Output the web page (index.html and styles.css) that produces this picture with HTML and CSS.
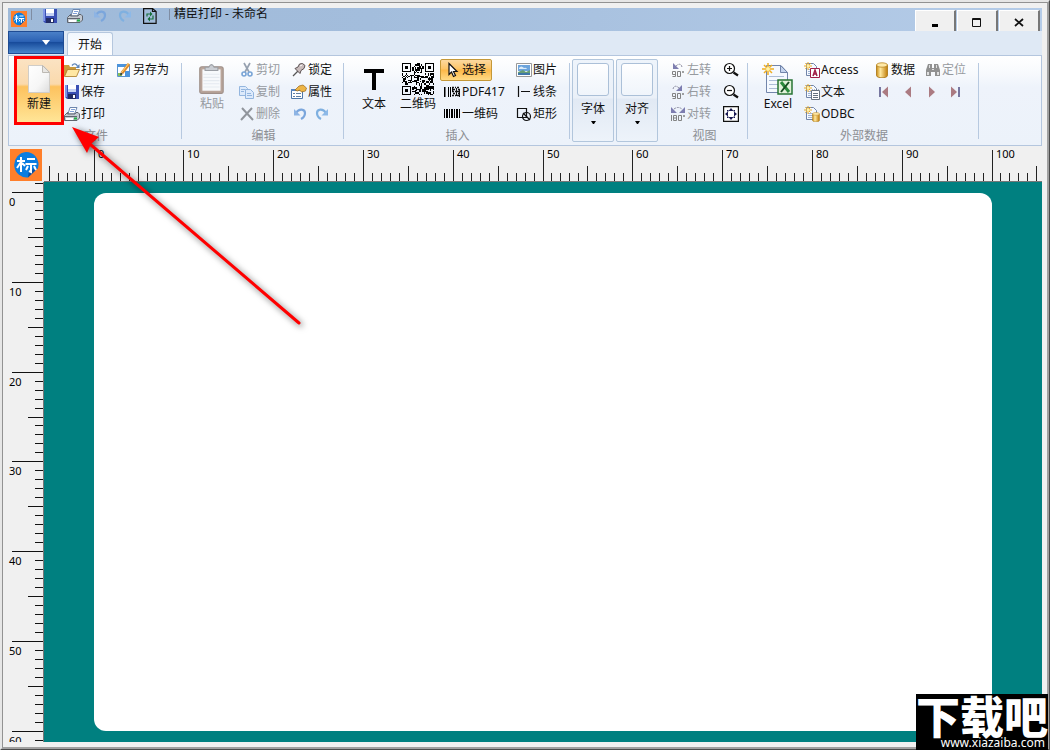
FILE: index.html
```html
<!DOCTYPE html>
<html lang="zh-CN">
<head>
<meta charset="utf-8">
<title>精臣打印 - 未命名</title>
<link rel="stylesheet" href="styles.css">
</head>
<body>
<svg class="defs" aria-hidden="true">
  <defs>
    <linearGradient id="gold" x1="0" x2="1"><stop offset="0" stop-color="#c98a12"/><stop offset=".35" stop-color="#ffe9a0"/><stop offset="1" stop-color="#c07c08"/></linearGradient>
    <linearGradient id="paper" x1="0" y1="0" x2="1" y2="1"><stop offset="0" stop-color="#fff"/><stop offset=".6" stop-color="#f6f6f6"/><stop offset="1" stop-color="#dcdcdc"/></linearGradient>
  </defs>
  <symbol id="i-logo" viewBox="0 0 32 32"><path fill="#ff7f2a" d="M0 0h32v32H0z"/><path fill="#0a7de0" d="M16 3a12.500 12.500 0 0 1 12 16L18 28.500A12.500 12.500 0 1 1 16 3z"/><path fill="#0b4f9e" d="M28 19l-10 9.500 1-7z"/><path fill="none" stroke="#fff" stroke-width="2" d="M7 12h8M11 8v15M11 13l-4 6M12 14l3 3M17 10h8M15.500 15h11M21 15v8l-2-1M18 17l-2 4M24 17l2 4"/></symbol>
  <symbol id="i-save" viewBox="0 0 16 16"><path fill="#3a4fb4" d="M1 1h14v14H3l-2-2z"/><path fill="#7f96e6" d="M1 1h2v12H1z"/><path fill="#fff" d="M4 1h8v7H4z"/><path fill="#c6d2f4" d="M4 5h8v3H4z"/><path fill="#222c66" d="M4 10h8v5H4z"/><path fill="#fff" d="M9 11h2v3H9z"/></symbol>
  <symbol id="i-print" viewBox="0 0 16 16"><path fill="#fff" stroke="#6d86ad" d="M6 1.500h7L10.500 8H4z"/><path stroke="#7fa0d8" d="M7 3.500h4M6 5.500h4"/><path fill="#c3c9d2" stroke="#5e646e" d="M.5 9.500l3-3H4L3.500 8H11l1-1.500h2l1.500 1.500v4L13 14.500H.5z"/><path fill="#5f656f" d="M1 10h12v1H1z"/><path fill="#1fae44" d="M10 11.500h3v2h-3z"/><path fill="#fff" d="M2 12h7v2H2z"/></symbol>
  <symbol id="i-undo" viewBox="0 0 16 16"><path fill="none" stroke="#7ba6dc" stroke-width="2.200" d="M4 7c3-5 9-4 9 0 0 3-2 5-4 6"/><path fill="#8db4e4" d="M2 3v6.500h6.500z"/></symbol>
  <symbol id="i-redo" viewBox="0 0 16 16"><path fill="none" stroke="#7fb0e0" stroke-width="2.200" d="M12 7C9 2 3 3 3 7c0 3 2 5 4 6"/><path fill="#8db9e8" d="M14 3v6.500H7.500z"/></symbol>
  <symbol id="i-refresh" viewBox="0 0 16 16"><path fill="none" stroke="#111" stroke-width="1.200" d="M1.600.6h9l3.500 3v11.800H1.600zM10.500.5v3h3"/><path fill="none" stroke="#16703a" stroke-width="1.200" d="M5 8.500V6h4M11 7.500V11H7"/><path fill="#16703a" d="M8 3.500L10.500 6 8 8.500zM8 8.500L5.500 11 8 13.500z"/></symbol>
  <symbol id="i-new" viewBox="0 0 24 30"><path fill="url(#paper)" stroke="#d0cdc8" d="M1.500 1.500H16L22.500 8v20.500h-21z"/><path fill="#e8e6e3" stroke="#bdb9b3" d="M15.500 1.500v7h7z"/></symbol>
  <symbol id="i-open" viewBox="0 0 16 16"><path fill="#c99a3c" d="M0 3h5l1 2h6v9H0z"/><path fill="#ffe7a3" stroke="#a87824" stroke-width=".8" d="M.5 14.500l3-7H15.500l-3 7z"/><path fill="none" stroke="#5c84b8" stroke-width="1.400" d="M8 3.500c2-2.500 4-2 5.500.5"/><path fill="#5c84b8" d="M15.500 2v4h-4z"/></symbol>
  <symbol id="i-saveas" viewBox="0 0 16 16"><path fill="#fff" stroke="#5c94cc" d="M1.500 2.500h12v12h-12z"/><path fill="#4c94dc" d="M1 2h9v3H1zM9 9h5v6H9z"/><path fill="#8ac058" d="M2 11h4v3H2z"/><path stroke="#e08a2a" stroke-width="3" d="M6 11l7-9"/><path stroke="#ffd678" d="M6 10l7-9"/><path fill="#333" d="M4 13.500l.7-3L7 12z"/></symbol>
  <symbol id="i-paste" viewBox="0 0 26 30"><rect x="1.500" y="3.500" width="22" height="25" rx="2" fill="#b39c90" stroke="#96857d"/><path fill="#f8fafc" d="M4 6h17v20H4z"/><path stroke="#e4e9ef" d="M5 10.500h15M5 13.500h15M5 16.500h15M5 19.500h15M5 22.500h15"/><path fill="#c5c9cf" stroke="#92969c" d="M6.500 7V4H10q2.500-5 5 0h3.500v3z"/></symbol>
  <symbol id="i-cut" viewBox="0 0 16 16"><path fill="none" stroke="#8d98a8" stroke-width="1.700" d="M5 1l5 9M11 1L6 10"/><g fill="none" stroke="#6c9cd2" stroke-width="1.600"><circle cx="5" cy="12" r="2"/><circle cx="11" cy="12" r="2"/></g></symbol>
  <symbol id="i-copy" viewBox="0 0 16 16"><g fill="#dceafc" stroke="#8bb0dc"><path d="M.5 2.500h6l2 2v7h-8z"/><path d="M6.500 5.500h5l3 3v6h-8z"/></g><path stroke="#8bb0dc" d="M2 5.500h4M2 7.500h3M8 9.500h4M8 11.500h5"/></symbol>
  <symbol id="i-del" viewBox="0 0 16 16"><path stroke="#878b92" stroke-width="2" d="M3 2l11 12M13 2L2 14"/></symbol>
  <symbol id="i-lock" viewBox="0 0 16 16"><path stroke="#555" stroke-width="1.300" d="M2 14l5-5"/><path fill="#c9bcbc" stroke="#5a5052" d="M4 6.500l5 5 1-3 3-2 1-3-2.500-2-3 .5L7 5z"/><path stroke="#fff" d="M9 4l2-1"/></symbol>
  <symbol id="i-prop" viewBox="0 0 16 16"><path fill="#fff" stroke="#4d77aa" d="M.5 5.500h11v9H.5z"/><path fill="#5684c0" d="M0 5h12v2H0z"/><path stroke="#5f7fa6" d="M2 9.500h2M5 9.500h5M2 12.500h2M5 12.500h5"/><path fill="#edb546" stroke="#99671a" stroke-width=".7" d="M4 6l4-4 4-1 3.500 3-1 3-4 1-2-2-2 1z"/></symbol>
  <symbol id="i-text" viewBox="0 0 32 32"><path fill="#000" d="M6 6h20v4h-8v17h-4V10H6z"/></symbol>
  <symbol id="i-cursor" viewBox="0 0 16 16"><path fill="#fff" stroke="#111" stroke-width="1.200" d="M5 1.500v11l2.500-2.500 2 4.500 2-1-2-4H13z"/></symbol>
  <symbol id="i-pdf" viewBox="0 0 16 16"><path d="M0 3h1.500v10H0zM4 3h1v10H4zM6 3h1v10H6z"/><path stroke="#111" stroke-width="1.300" stroke-dasharray="2 1 1 1" d="M8 3.500h8M9 5.500h7M8 7.500h8M9 9.500h6M8 11.500h8"/><path stroke="#111" d="M8.500 4v4M12.500 4v8M15.500 6v7"/></symbol>
  <symbol id="i-bar" viewBox="0 0 16 16"><path d="M0 3h1v9H0zM2 3h2v9H2zM5 3h1v9H5zM7 3h2v9H7zM10 3h1v9h-1zM12 3h2v9h-2zM15 3h1v9h-1z"/></symbol>
  <symbol id="i-pic" viewBox="0 0 16 16"><path fill="#fff" stroke="#999" d="M.5 1.500h15v13H.5z"/><path fill="#6da4dc" d="M2 3h12v6H2z"/><path fill="#dcecf8" d="M3 6q2-3 5 0 2-1 3 1H3z"/><path fill="#659d78" d="M2 10l5-2 3 2 4-2v5H2z"/><path fill="#3f77a8" d="M2 11h12v2H2z"/></symbol>
  <symbol id="i-line" viewBox="0 0 16 16"><path fill="none" stroke="#111" stroke-width="1.200" d="M2.500 2v11M5 7.500h9"/></symbol>
  <symbol id="i-rect" viewBox="0 0 16 16"><g fill="none" stroke="#111" stroke-width="1.200"><path d="M1.500 2.500h9v9h-9z"/><circle cx="10.500" cy="10.500" r="4"/><path d="M7 7l7 7"/></g></symbol>
  <symbol id="i-left" viewBox="0 0 16 16"><path fill="#7171a8" d="M3 1v6h6z"/><path fill="none" stroke="#7f7f94" stroke-dasharray="2 1" d="M6 4c3-3 6-2 6 2"/><path fill="none" stroke="#777" d="M5.500 12.500h-3v-3h3v5h-3M7.500 9.500h3v5h-3zM12.500 9.500h1v1h-1z"/></symbol>
  <symbol id="i-right" viewBox="0 0 16 16"><path fill="#7171a8" d="M12 1v6H6z"/><path fill="none" stroke="#7f7f94" stroke-dasharray="2 1" d="M9 4C6 1 3 2 3 6"/><path fill="none" stroke="#777" d="M5.500 12.500h-3v-3h3v5h-3M7.500 9.500h3v5h-3zM12.500 9.500h1v1h-1z"/></symbol>
  <symbol id="i-flip" viewBox="0 0 16 16"><path fill="#7171a8" d="M1 1v6h6zM15 1v6H9z"/><path fill="none" stroke="#7f7f94" stroke-dasharray="2 1" d="M4 3q4-3 8 0"/><path fill="none" stroke="#777" d="M1.500 9v6M3.500 9.500h3v5h-3zM3.500 12h3M8.500 9.500h3v5h-3zM13.500 9.500h1v1h-1z"/></symbol>
  <symbol id="i-zin" viewBox="0 0 16 16"><circle cx="6.500" cy="6.500" r="5" fill="#fff" stroke="#111" stroke-width="1.200"/><path stroke="#111" stroke-width="1.200" d="M4 6.500h5M6.500 4v5"/><path stroke="#111" stroke-width="2.200" d="M10.500 10.500l4.500 3"/></symbol>
  <symbol id="i-zout" viewBox="0 0 16 16"><circle cx="6.500" cy="6.500" r="5" fill="#fff" stroke="#111" stroke-width="1.200"/><path stroke="#111" stroke-width="1.200" d="M4 6.500h5"/><path stroke="#111" stroke-width="2.200" d="M10.500 10.500l4.500 3"/></symbol>
  <symbol id="i-fit" viewBox="0 0 16 16"><path fill="#fff" stroke="#111" stroke-width="1.200" d="M.6.6h14.800v14.800H.6z"/><path fill="#171750" d="M8 2l2.500 3h-5zM8 14l2.500-3h-5zM2 8l3-2.500v5zM14 8l-3-2.500v5z"/><path fill="#171750" d="M4 4h1.500v1.500H4zM10.500 4H12v1.500h-1.500zM4 10.500h1.500V12H4zM10.500 10.500H12V12h-1.500z"/></symbol>
  <symbol id="i-star" viewBox="0 0 12 12"><path stroke="#efae22" stroke-width="1.500" d="M6 0v12M0 6h12M2 2l8 8M10 2l-8 8"/><circle cx="6" cy="6" r="2" fill="#fff3a8"/></symbol>
  <symbol id="i-excel" viewBox="0 0 32 32"><path fill="#f5f9ff" stroke="#7285ab" d="M4.500 2.500H19l6.500 7v20h-21z"/><path fill="#c4d4ee" stroke="#7285ab" d="M18.500 2.500v7h7z"/><path stroke="#adbdd8" d="M7 13.500h15M7 17.500h15M7 21.500h9M7 25.500h9"/><use href="#i-star" width="12" height="12"/><path fill="#e2f2da" stroke="#287434" stroke-width="1.500" d="M16 17h14v14H16z"/><path stroke="#2b8a3c" stroke-width="3" d="M19 19l8 10"/><path stroke="#174f22" stroke-width="2" d="M27 19l-8 10"/></symbol>
  <symbol id="i-doc" viewBox="0 0 16 16"><path fill="#f5f9ff" stroke="#7184a8" d="M2.500 1.500h7l3 3v9h-10z"/><path stroke="#9fb2d2" d="M4 7.500h6M4 9.500h6M4 11.500h4"/><use href="#i-star" width="8" height="8"/></symbol>
  <symbol id="i-access" viewBox="0 0 16 16"><use href="#i-doc"/><path fill="#fff" stroke="#a01e48" d="M6.500 6.500h9v9h-9z"/><path fill="none" stroke="#a01e48" stroke-width="1.500" d="M9 14l2-6 2 6M9.500 12h3"/></symbol>
  <symbol id="i-txt" viewBox="0 0 16 16"><use href="#i-doc"/><path fill="#fff" stroke="#66727f" d="M7.500 6.500h8v9h-8z"/><path stroke="#66727f" stroke-dasharray="1 1" d="M8 6h7"/><path stroke="#66727f" d="M9 9.500h5M9 11.500h5M9 13.500h5"/></symbol>
  <symbol id="i-db" viewBox="0 0 16 16"><path fill="url(#gold)" stroke="#a87412" stroke-width=".8" d="M2.500 3v10.500c0 3 11 3 11 0V3z"/><ellipse cx="8" cy="3" rx="5.500" ry="2.200" fill="#ffe9a8" stroke="#b98420" stroke-width=".8"/></symbol>
  <symbol id="i-odbc" viewBox="0 0 16 16"><use href="#i-doc"/><use href="#i-db" x="7" y="6" width="10" height="10"/></symbol>
  <symbol id="i-find" viewBox="0 0 16 16"><path fill="#868686" d="M3 2h4v4h2V2h4l2 6v6h-5v-4H6v4H1V8z"/><path fill="#ddd" d="M4 3h1v3H4zM11 3h1v3h-1zM2 10h2v3H2zM12 10h2v3h-2zM7 7h2v1H7z"/></symbol>
  <symbol id="i-first" viewBox="0 0 16 16"><path fill="#7777a0" d="M3 3h2v10H3z"/><path fill="#ab7b82" d="M12 2.500v11L6 8z"/></symbol>
  <symbol id="i-prev" viewBox="0 0 16 16"><path fill="#ab7b82" d="M11 2.500v11L5 8z"/></symbol>
  <symbol id="i-next" viewBox="0 0 16 16"><path fill="#ab7b82" d="M5 2.500v11L11 8z"/></symbol>
  <symbol id="i-last" viewBox="0 0 16 16"><path fill="#7777a0" d="M10 3h2v10h-2z"/><path fill="#ab7b82" d="M3 2.500v11L9 8z"/></symbol>
</svg>

<div class="window">
  <header class="titlebar">
    <svg class="icon title-logo"><use href="#i-logo"/></svg>
    <span class="title-sep"></span>
    <div class="quick">
      <button class="quick-btn" aria-label="保存"><svg class="icon"><use href="#i-save"/></svg></button>
      <button class="quick-btn" aria-label="打印"><svg class="icon"><use href="#i-print"/></svg></button>
      <button class="quick-btn" aria-label="撤销"><svg class="icon"><use href="#i-undo"/></svg></button>
      <button class="quick-btn" aria-label="重做"><svg class="icon"><use href="#i-redo"/></svg></button>
      <button class="quick-btn" aria-label="刷新"><svg class="icon"><use href="#i-refresh"/></svg></button>
    </div>
    <span class="title-sep"></span>
    <h1 class="title">精臣打印 - 未命名</h1>
    <div class="controls">
      <button class="control" aria-label="最小化"><svg viewBox="0 0 12 12"><path d="M3 7h6v3H3z"/></svg></button>
      <button class="control" aria-label="最大化"><svg viewBox="0 0 12 12"><path fill="none" stroke="#111" d="M1.500 1.500h8v8h-8zM1 2.500h9"/></svg></button>
      <button class="control" aria-label="关闭"><svg viewBox="0 0 12 12"><path stroke="#111" stroke-width="1.800" d="M2 2l8 7M10 2L2 9"/></svg></button>
    </div>
  </header>

  <nav class="tabs">
    <button class="app-menu" aria-label="菜单"><svg viewBox="0 0 8 5"><path fill="#fff" d="M0 0h8L4 5z"/></svg></button>
    <button class="tab">开始</button>
  </nav>

  <section class="ribbon">
    <div class="group file">
      <div class="tools">
        <button class="big new"><svg class="icon-new"><use href="#i-new"/></svg>新建</button>
        <div class="col">
          <button class="small"><svg class="icon"><use href="#i-open"/></svg>打开</button>
          <button class="small"><svg class="icon"><use href="#i-save"/></svg>保存</button>
          <button class="small"><svg class="icon"><use href="#i-print"/></svg>打印</button>
        </div>
        <div class="col">
          <button class="small"><svg class="icon"><use href="#i-saveas"/></svg>另存为</button>
        </div>
      </div>
      <div class="caption">文件</div>
    </div>

    <div class="group edit">
      <div class="tools">
        <button class="big paste off"><svg class="icon-big"><use href="#i-paste"/></svg>粘贴</button>
        <div class="col">
          <button class="small off"><svg class="icon"><use href="#i-cut"/></svg>剪切</button>
          <button class="small off"><svg class="icon"><use href="#i-copy"/></svg>复制</button>
          <button class="small off"><svg class="icon"><use href="#i-del"/></svg>删除</button>
        </div>
        <div class="col">
          <button class="small"><svg class="icon"><use href="#i-lock"/></svg>锁定</button>
          <button class="small"><svg class="icon"><use href="#i-prop"/></svg>属性</button>
          <div class="row">
            <button class="tiny" aria-label="撤销"><svg class="icon"><use href="#i-undo"/></svg></button>
            <button class="tiny" aria-label="重做"><svg class="icon"><use href="#i-redo"/></svg></button>
          </div>
        </div>
      </div>
      <div class="caption">编辑</div>
    </div>

    <div class="group insert">
      <div class="tools">
        <button class="big"><svg class="icon-big"><use href="#i-text"/></svg>文本</button>
        <button class="big qr"><svg class="icon-big" id="qr" viewBox="0 0 25 25" shape-rendering="crispEdges"></svg>二维码</button>
        <div class="col codes">
          <button class="small selected"><svg class="icon"><use href="#i-cursor"/></svg>选择</button>
          <button class="small"><svg class="icon"><use href="#i-pdf"/></svg>PDF417</button>
          <button class="small"><svg class="icon"><use href="#i-bar"/></svg>一维码</button>
        </div>
        <div class="col">
          <button class="small"><svg class="icon"><use href="#i-pic"/></svg>图片</button>
          <button class="small"><svg class="icon"><use href="#i-line"/></svg>线条</button>
          <button class="small"><svg class="icon"><use href="#i-rect"/></svg>矩形</button>
        </div>
      </div>
      <div class="caption">插入</div>
    </div>

    <div class="galleries">
      <button class="gallery"><span class="preview"></span>字体<svg class="caret" viewBox="0 0 5 3"><path d="M0 0h5L3 3H2z"/></svg></button>
      <button class="gallery"><span class="preview"></span>对齐<svg class="caret" viewBox="0 0 5 3"><path d="M0 0h5L3 3H2z"/></svg></button>
    </div>

    <div class="group view">
      <div class="tools">
        <div class="col turn">
          <button class="small off"><svg class="icon"><use href="#i-left"/></svg>左转</button>
          <button class="small off"><svg class="icon"><use href="#i-right"/></svg>右转</button>
          <button class="small off"><svg class="icon"><use href="#i-flip"/></svg>对转</button>
        </div>
        <div class="col">
          <button class="small" aria-label="放大"><svg class="icon"><use href="#i-zin"/></svg></button>
          <button class="small" aria-label="缩小"><svg class="icon"><use href="#i-zout"/></svg></button>
          <button class="small" aria-label="适合窗口"><svg class="icon"><use href="#i-fit"/></svg></button>
        </div>
      </div>
      <div class="caption">视图</div>
    </div>

    <div class="group external">
      <div class="tools">
        <button class="big excel"><svg class="icon-big"><use href="#i-excel"/></svg>Excel</button>
        <div class="col sources">
          <button class="small"><svg class="icon"><use href="#i-access"/></svg>Access</button>
          <button class="small"><svg class="icon"><use href="#i-txt"/></svg>文本</button>
          <button class="small"><svg class="icon"><use href="#i-odbc"/></svg>ODBC</button>
        </div>
        <div class="col">
          <div class="row spaced">
            <button class="small"><svg class="icon"><use href="#i-db"/></svg>数据</button>
            <button class="small off"><svg class="icon"><use href="#i-find"/></svg>定位</button>
          </div>
          <div class="row">
            <button class="tiny nav" aria-label="第一条"><svg class="icon"><use href="#i-first"/></svg></button>
            <button class="tiny nav" aria-label="上一条"><svg class="icon"><use href="#i-prev"/></svg></button>
            <button class="tiny nav" aria-label="下一条"><svg class="icon"><use href="#i-next"/></svg></button>
            <button class="tiny nav" aria-label="最后一条"><svg class="icon"><use href="#i-last"/></svg></button>
          </div>
        </div>
      </div>
      <div class="caption">外部数据</div>
    </div>
  </section>

  <main class="editor">
    <div class="corner"><svg class="corner-logo"><use href="#i-logo"/></svg></div>
    <svg class="ruler" id="ruler-x"></svg>
    <svg class="ruler" id="ruler-y"></svg>
    <div class="workspace"><div class="sheet" id="sheet"></div></div>
  </main>
</div>

<div class="highlight"></div>
<svg class="arrow" viewBox="0 0 250 220" aria-hidden="true">
  <path d="M22 19L237 203" stroke="#f00" stroke-width="3" stroke-linecap="round"/>
  <path d="M10 7l27 10-8 7-4 9z" fill="#f00"/>
</svg>
<div class="watermark"><span class="mark-name">下载吧</span><span class="mark-url">www.xiazaiba.com</span></div>
<script src="app.js"></script>
</body>
</html>
```
FILE: styles.css
```css
* { box-sizing: border-box; }
body {
  margin: 0;
  height: 100vh;
  overflow: hidden;
  position: relative;
  font: 12px/16px "Noto Sans", "Noto Sans CJK SC", sans-serif;
  color: #111;
  background: #f0f0f0;
}
button {
  font: inherit;
  color: inherit;
  background: none;
  border: 0;
  padding: 0;
  margin: 0;
  white-space: nowrap;
}
svg { display: block; flex: none; }
.defs { position: absolute; width: 0; height: 0; }
.icon { width: 16px; height: 16px; }
.icon-big { width: 32px; height: 32px; }
.icon-new { width: 24px; height: 32px; }

.window {
  height: 100%;
  display: flex;
  flex-direction: column;
  padding: 5px;
  border: 3px ridge #dcdcdc;
  border-top-color: #e6e6e6;
  border-left-color: #e6e6e6;
  border-right-color: #a0a0a0;
  border-bottom-color: #a0a0a0;
}

.titlebar {
  flex: none;
  height: 23px;
  display: flex;
  align-items: flex-start;
  padding-left: 3px;
  background: linear-gradient(90deg, #9fbad9, #a3bddc 35%, #b5cce8);
}
.title-logo { margin-top: 3px; }
.title-sep { width: 1px; height: 11px; margin: 1px 4px 0; background: #7f8da3; }
.quick { display: flex; gap: 2px; padding: 0 3px 0 3px; }
.quick-btn { width: 23px; height: 16px; padding: 0 3px; }
.title { margin: 0; font-size: 12px; font-weight: 400; line-height: 12px; }
.controls { display: flex; gap: 1px; margin: 2px 2px 0 auto; }
.control {
  width: 41px;
  height: 21px;
  display: flex;
  align-items: center;
  justify-content: center;
  padding-top: 4px;
  background: #f0f0f0;
  border: 1px solid #fff;
  border-right: 2px solid #777;
  border-bottom: 0;
}
.control svg { width: 12px; height: 12px; }

.tabs {
  flex: none;
  height: 24px;
  display: flex;
  gap: 3px;
  background: #dfe9f5;
}
.app-menu {
  width: 56px;
  height: 23px;
  display: flex;
  align-items: center;
  justify-content: flex-end;
  padding-right: 13px;
  border: 1px solid #1f4c94;
  background: linear-gradient(#4a80c8, #2c62b4 45%, #184c9c 50%, #4a86cc);
}
.app-menu svg { width: 8px; height: 5px; }
.tab {
  width: 46px;
  margin: 1px 0 -1px;
  padding-top: 1px;
  border: 1px solid #b5c7de;
  border-bottom: 0;
  border-radius: 3px 3px 0 0;
  background: linear-gradient(#f2f7fd, #fff);
}

.ribbon {
  flex: none;
  display: flex;
  border: 1px solid #b4c6de;
  background: linear-gradient(#fff, #f8fafd 18%, #eef3fb 35%, #ecf2fa);
}
.group {
  flex: none;
  display: flex;
  flex-direction: column;
  padding-top: 3px;
  border-right: 1px solid;
  border-image: linear-gradient(transparent 8px, #b7c9e0 8px, #b7c9e0 82px, transparent 82px) 1;
}
.tools { display: flex; height: 66px; }
.caption { height: 20px; padding: 1px 0 0 2px; line-height: 19px; text-align: center; color: #8c8f94; }
.file { width: 173px; }
.edit { width: 162px; }
.insert { width: 226px; }
.view { width: 88px; }
.external { width: 231px; }
.file .tools { padding-left: 7px; }
.edit .tools, .insert .tools { padding-left: 14px; }
.view .tools { padding-left: 9px; }
.external .tools { padding-left: 12px; }
.big {
  width: 32px;
  display: flex;
  flex-direction: column;
  align-items: center;
  gap: 1px;
  padding-top: 4px;
}
.new {
  width: 46px;
  margin-right: 1px;
  background: linear-gradient(#fbe3c3, #fad9ac 38%, #fdc25e 42%, #ffe89c);
}
.paste { margin-right: 10px; }
.qr { width: 40px; margin: 0 2px 0 8px; }
.excel { width: 36px; margin-right: 7px; }
.col { display: flex; flex-direction: column; align-items: flex-start; min-width: 52px; }
.row { display: flex; }
.spaced { gap: 8px; }
.small { height: 22px; display: flex; align-items: center; gap: 1px; padding: 0 1px; }
.codes { width: 75px; }
.codes .small { gap: 2px; padding: 0 4px; }
.codes .selected {
  padding: 0 5px 0 3px;
  border: 1px solid #c49838;
  border-radius: 2px;
  background: linear-gradient(#fcd9a0, #fdc566 45%, #fdb848 50%, #ffdb86);
}
.view .col { min-width: 53px; }
.sources { width: 70px; }
.tiny { width: 22px; height: 22px; padding: 0 2px; }
.nav { width: 24px; padding: 0 3px; }
.off { color: #969a9f; }
.off .icon-big, .off .icon { opacity: .9; }

.galleries { display: flex; gap: 2px; padding: 3px 2px; }
.gallery {
  width: 42px;
  display: flex;
  flex-direction: column;
  align-items: center;
  padding-top: 3px;
  border: 1px solid #b2c6dc;
  border-radius: 2px;
  background: linear-gradient(#eef4fb, #eaf0f8 47%, #e1e9f4 48%, #edf3fa);
}
.preview {
  width: 32px;
  height: 33px;
  margin-bottom: 5px;
  border: 1px solid #abc0d8;
  border-radius: 3px;
  background: linear-gradient(#fff, #f6f9fd 50%, #f0f5fb);
}
.caret { width: 5px; height: 3px; margin-top: 4px; }

.editor {
  flex: 1;
  min-height: 0;
  display: grid;
  grid-template: 36px minmax(0, 1fr) / 36px minmax(0, 1fr);
}
.corner { padding: 3px 2px; }
.corner-logo { width: 32px; height: 32px; }
.ruler { width: 100%; height: 100%; overflow: hidden; font-size: 11px; }
.workspace { display: flex; padding: 11px 50px; background: #008080; }
.sheet { flex: 1; border-radius: 12px; background: #fff; }

.highlight {
  position: absolute;
  left: 14px;
  top: 56px;
  width: 50px;
  height: 69px;
  border: 3px solid #f00;
}
.arrow {
  position: absolute;
  left: 62px;
  top: 120px;
  width: 250px;
  height: 220px;
  filter: drop-shadow(2px 2px 3px rgba(0, 0, 0, .6));
}
.watermark {
  position: absolute;
  right: 2px;
  bottom: 0;
  display: flex;
  flex-direction: column;
  background: #000;
  color: #fff;
}
.mark-name { font: 900 44px/42px "Noto Sans CJK SC", sans-serif; }
.mark-url {
  padding-right: 3px;
  font-size: 12px;
  line-height: 14px;
  text-align: right;
}
```
FILE: app.js
```js
const NS = 'http://www.w3.org/2000/svg';

function add(parent, name, attrs, text) {
  const el = document.createElementNS(NS, name);
  for (const key in attrs) el.setAttribute(key, attrs[key]);
  if (text !== undefined) el.textContent = text;
  parent.append(el);
}

// One tick per millimetre; the sheet is 100 mm wide.
function drawRulers() {
  const sheet = document.getElementById('sheet').getBoundingClientRect();
  const rx = document.getElementById('ruler-x');
  const ry = document.getElementById('ruler-y');
  const bx = rx.getBoundingClientRect();
  const by = ry.getBoundingClientRect();
  const mm = sheet.width / 100;
  rx.replaceChildren();
  ry.replaceChildren();
  const size = i => (i % 10 === 0 ? 32 : i % 5 === 0 ? 16 : 9);

  for (let i = -5; i <= 105; i++) {
    const x = Math.floor(sheet.left - bx.left + i * mm);
    add(rx, 'rect', { x, y: 36 - size(i), width: 1, height: size(i), fill: '#222' });
    if (i % 10 === 0) add(rx, 'text', { x: x + 4, y: 12 }, i);
  }
  add(rx, 'rect', { x: 0, y: 35, width: '100%', height: 1, fill: '#777' });

  for (let i = -1; sheet.top + i * mm < by.bottom; i++) {
    const y = Math.round(sheet.top - by.top + i * mm) - 1;
    add(ry, 'rect', { x: 36 - size(i), y, width: size(i), height: 1, fill: '#111' });
    if (i % 10 === 0) add(ry, 'text', { x: 1, y: y + 14 }, Math.abs(i));
  }
  add(ry, 'rect', { x: 35, y: 0, width: 1, height: '100%', fill: '#777' });
}

function drawQr() {
  const svg = document.getElementById('qr');
  const n = 25;
  let seed = 7;
  let d = '';
  const finder = (x, y) => {
    const ring = Math.max(Math.abs(x - 3), Math.abs(y - 3));
    return ring === 3 || ring < 2;
  };
  for (let y = 0; y < n; y++) {
    for (let x = 0; x < n; x++) {
      seed = (seed * 1103515245 + 12345) % 2147483648;
      let on = (seed >> 16) % 2 === 0;
      if (x < 8 && y < 8) on = x < 7 && y < 7 && finder(x, y);
      if (x > 16 && y < 8) on = x > 17 && y < 7 && finder(x - 18, y);
      if (x < 8 && y > 16) on = x < 7 && y > 17 && finder(x, y - 18);
      if (on) d += `M${x} ${y}h1v1h-1z`;
    }
  }
  add(svg, 'path', { d });
}

drawQr();
drawRulers();
window.addEventListener('resize', drawRulers);
```
